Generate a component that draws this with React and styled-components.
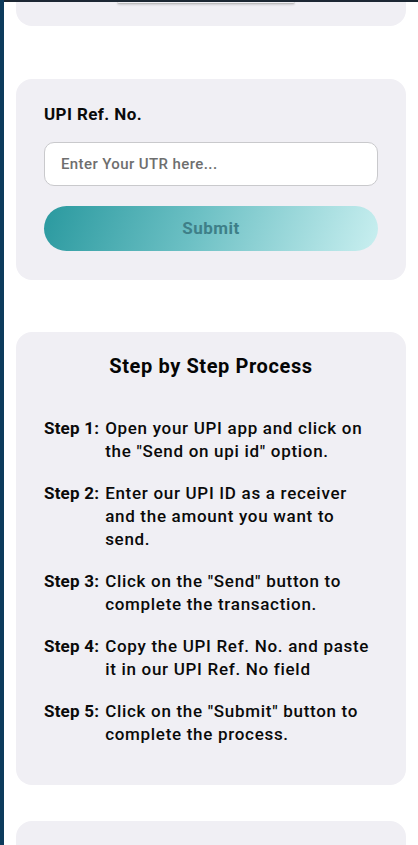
import React from 'react';
import styled, { createGlobalStyle } from 'styled-components';

const GlobalStyle = createGlobalStyle`
  * { box-sizing: border-box; }
  body {
    margin: 0;
    background: #ffffff;
    font-family: Roboto, "Noto Sans", sans-serif;
    color: #111;
  }
`;

const steps = [
  { label: 'Step 1:', text: 'Open your UPI app and click on the "Send on upi id" option.' },
  { label: 'Step 2:', text: 'Enter our UPI ID as a receiver and the amount you want to send.' },
  { label: 'Step 3:', text: 'Click on the "Send" button to complete the transaction.' },
  { label: 'Step 4:', text: 'Copy the UPI Ref. No. and paste it in our UPI Ref. No field' },
  { label: 'Step 5:', text: 'Click on the "Submit" button to complete the process.' },
];

const App = () => {
  return (
    <>
      <GlobalStyle />
      <Shell>
        <TopBar />
        <Content>
          <Card $gap="53px" $pad="0 0 22px" $peek>
            <PeekButton />
          </Card>

          <Card $gap="52px" $pad="25px 28px 29px">
            <Label>UPI Ref. No.</Label>
            <Input placeholder="Enter Your UTR here..." />
            <SubmitButton>Submit</SubmitButton>
          </Card>

          <Card $gap="36px" $pad="22px 28px 39px">
            <Title>Step by Step Process</Title>
            <StepList>
              {steps.map((s) => (
                <Step key={s.label}>
                  <StepLabel>{s.label}</StepLabel>
                  <StepText>{s.text}</StepText>
                </Step>
              ))}
            </StepList>
          </Card>

          <Card $gap="0" $pad="0" $tall />
        </Content>
      </Shell>
    </>
  );
};

export default App;

const Shell = styled.div`
  min-height: 100vh;
  border-left: 4px solid #0d3b5c;
  display: flex;
  flex-direction: column;
`;

const TopBar = styled.div`
  height: 2px;
  background: #1c2733;
`;

const Content = styled.main`
  display: flex;
  flex-direction: column;
  padding: 0 12px;
`;

const Card = styled.section`
  background: #f0eff4;
  border-radius: ${(p) => (p.$peek ? '0 0 16px 16px' : '16px')};
  padding: ${(p) => p.$pad};
  margin-bottom: ${(p) => p.$gap};
  min-height: ${(p) => (p.$tall ? '60px' : '0')};
  display: flex;
  flex-direction: column;
  align-items: ${(p) => (p.$peek ? 'center' : 'stretch')};
`;

const PeekButton = styled.div`
  margin-left: -10px;
  width: 178px;
  height: 2px;
  border-bottom: 1px solid #bdbdbd;
  border-radius: 0 0 6px 6px;
  box-shadow: 0 1px 2px rgba(0, 0, 0, 0.15);
`;

const Label = styled.label`
  font-size: 17px;
  font-weight: 700;
  line-height: 20px;
  letter-spacing: 0.4px;
  color: #0a0a0a;
  margin-bottom: 18px;
`;

const Input = styled.input`
  height: 44px;
  width: 100%;
  border: 1px solid #c9c9cc;
  border-radius: 10px;
  background: #fff;
  padding: 0 16px;
  font-family: Roboto, "Noto Sans", sans-serif;
  font-size: 15px;
  font-weight: 500;
  letter-spacing: 0.4px;
  outline: none;
  margin-bottom: 20px;
  &::placeholder {
    color: #6e6e6e;
  }
`;

const SubmitButton = styled.button`
  height: 45px;
  width: 100%;
  border: none;
  border-radius: 23px;
  background: linear-gradient(110deg, #2a999f 0%, #6cc0c4 45%, #c9eff0 100%);
  color: #3e7f88;
  font-family: Roboto, "Noto Sans", sans-serif;
  font-size: 17px;
  font-weight: 700;
  letter-spacing: 0.5px;
  padding-bottom: 2px;
`;

const Title = styled.h2`
  margin: 0 0 39px;
  text-align: center;
  font-size: 20px;
  line-height: 24px;
  font-weight: 700;
  letter-spacing: 0.6px;
  color: #050505;
`;

const StepList = styled.ol`
  list-style: none;
  margin: 0;
  padding: 0;
  display: flex;
  flex-direction: column;
  gap: 19px;
`;

const Step = styled.li`
  display: flex;
  gap: 6px;
  font-size: 17px;
  line-height: 23px;
  color: #0a0a0a;
`;

const StepLabel = styled.span`
  font-weight: 700;
  white-space: nowrap;
  letter-spacing: 0.2px;
`;

const StepText = styled.span`
  font-weight: 500;
  letter-spacing: 0.7px;
`;
